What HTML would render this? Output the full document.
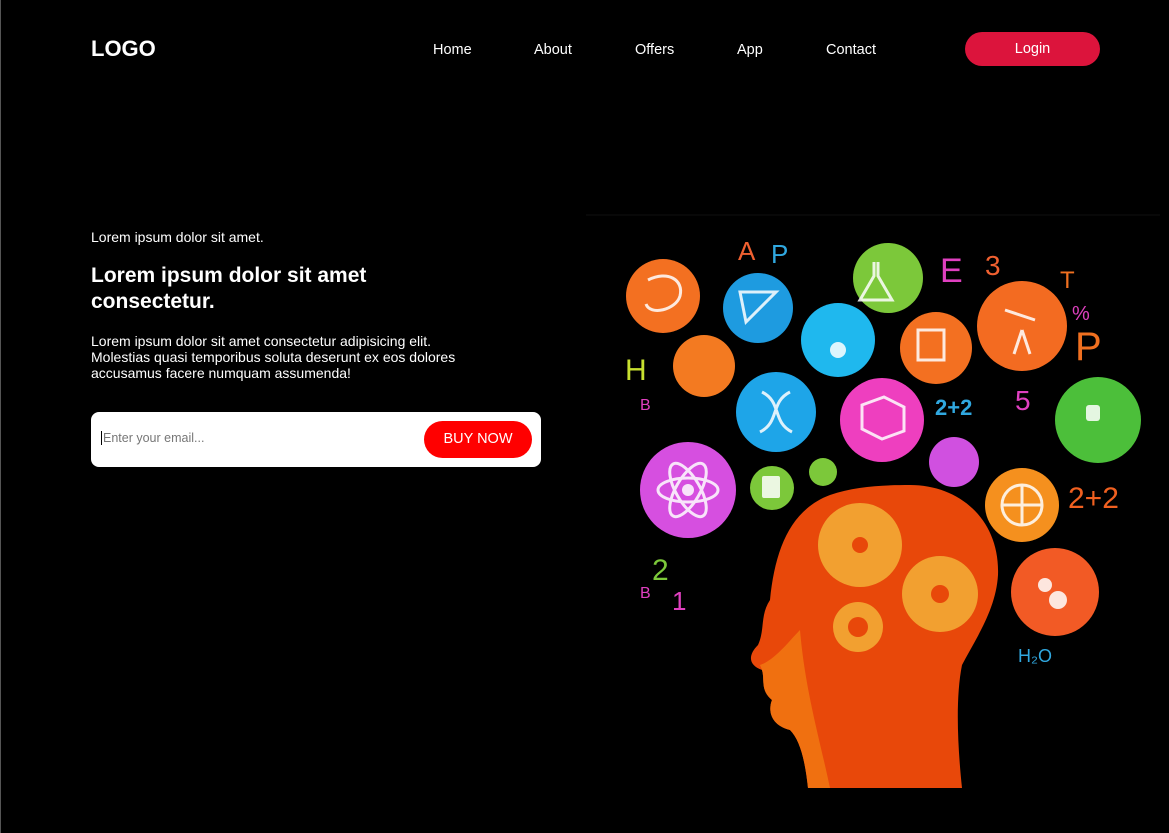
<!DOCTYPE html>
<html><head><style>
*{margin:0;padding:0;box-sizing:border-box}
body{width:1169px;height:833px;background:#000;font-family:"Liberation Sans",Arial,sans-serif;color:#fff;position:relative;overflow:hidden}
.bl{position:absolute;left:0;top:0;width:1px;height:833px;background:#555}
.logo{position:absolute;left:91px;top:36px;font-size:22px;font-weight:bold}
.nav a{position:absolute;top:42px;font-size:14.5px;color:#fff;text-decoration:none}
.login{position:absolute;left:965px;top:32px;width:135px;height:34px;border-radius:17px;background:#dc143c;font-size:14.5px;text-align:center;line-height:35px}
.p1{position:absolute;left:91px;top:229px;font-size:14px}
h1{position:absolute;left:91px;top:263px;font-size:21px;line-height:26px;font-weight:bold}
.p2{position:absolute;left:91px;top:333px;font-size:14px;line-height:16px;width:400px}
.box{position:absolute;left:91px;top:412px;width:450px;height:55px;background:#fff;border-radius:8px}
.box span{position:absolute;left:10px;top:19px;font-size:12.5px;color:#777;border-left:1px solid #000;padding-left:1px}
.buy{position:absolute;left:333px;top:9px;width:108px;height:37px;border-radius:19px;background:#f00;font-size:14.5px;text-align:center;line-height:37px}
svg{position:absolute;left:0;top:0}
</style></head><body>
<div class="bl"></div>
<div class="logo">LOGO</div>
<div class="nav"><a style="left:433px">Home</a><a style="left:534px">About</a><a style="left:635px">Offers</a><a style="left:737px">App</a><a style="left:826px">Contact</a></div>
<div class="login">Login</div>
<div class="p1">Lorem ipsum dolor sit amet.</div>
<h1>Lorem ipsum dolor sit amet<br>consectetur.</h1>
<div class="p2">Lorem ipsum dolor sit amet consectetur adipisicing elit. Molestias quasi temporibus soluta deserunt ex eos dolores accusamus facere numquam assumenda!</div>
<div class="box"><span>Enter your email...</span><div class="buy">BUY NOW</div></div>
<svg width="1169" height="833">
<line x1="586" y1="215" x2="1160" y2="215" stroke="#111"/>
<path d="M910 485 C960 485 1000 520 998 575 C996 610 975 640 962 665 C955 700 958 750 962 788 L808 788 C805 760 800 740 790 730 C770 725 768 710 772 700 C760 690 765 680 762 670 C748 665 748 655 758 645 C765 630 760 615 770 600 C775 550 790 510 830 495 C855 486 885 485 910 485Z" fill="#e8480a"/>
<path d="M760 665 C775 660 790 640 800 630 C805 690 820 740 830 788 L808 788 C805 760 800 740 790 730 C770 725 768 710 772 700 C760 690 765 680 762 670Z" fill="#f07010"/>
<g fill="#f2a030"><circle cx="860" cy="545" r="42"/><circle cx="940" cy="594" r="38"/><circle cx="858" cy="627" r="25"/></g>
<g fill="#e8480a"><circle cx="860" cy="545" r="8"/><circle cx="940" cy="594" r="9"/><circle cx="858" cy="627" r="10"/></g>
<g>
<circle cx="663" cy="296" r="37" fill="#f37021"/>
<circle cx="758" cy="308" r="35" fill="#1e9be0"/>
<circle cx="888" cy="278" r="35" fill="#7cc83a"/>
<circle cx="838" cy="340" r="37" fill="#1fb8ee"/>
<circle cx="936" cy="348" r="36" fill="#f37021"/>
<circle cx="1022" cy="326" r="45" fill="#f36b21"/>
<circle cx="704" cy="366" r="31" fill="#f37a21"/>
<circle cx="776" cy="412" r="40" fill="#1ea5e8"/>
<circle cx="882" cy="420" r="42" fill="#ee3fbf"/>
<circle cx="1098" cy="420" r="43" fill="#4cbf3a"/>
<circle cx="688" cy="490" r="48" fill="#d64fe0"/>
<circle cx="772" cy="488" r="22" fill="#7cc83a"/>
<circle cx="823" cy="472" r="14" fill="#7cc83a"/>
<circle cx="954" cy="462" r="25" fill="#d050e0"/>
<circle cx="1022" cy="505" r="37" fill="#f5901e"/>
<circle cx="1055" cy="592" r="44" fill="#f25a25"/>
</g>
<g fill="none" stroke="#fff" stroke-width="3" opacity=".85">
<ellipse cx="688" cy="490" rx="30" ry="12"/><ellipse cx="688" cy="490" rx="30" ry="12" transform="rotate(60 688 490)"/><ellipse cx="688" cy="490" rx="30" ry="12" transform="rotate(-60 688 490)"/>
<path d="M862 405 l22 -8 l20 10 v24 l-22 8 l-20 -10z"/>
<path d="M762 392 c20 10 10 30 30 40 M790 392 c-20 10 -10 30 -30 40"/>
<circle cx="1022" cy="505" r="20"/><path d="M1002 505 h40 M1022 485 v40"/>
<path d="M740 292 l36 0 l-30 30z"/>
<path d="M874 262 l0 14 l-14 24 h32 l-14 -24 v-14"/>
<path d="M1005 310 l30 10 M1022 330 l-8 24 M1022 330 l8 24"/>
<path d="M918 330 h26 v30 h-26z"/>
<path d="M648 280 c20 -10 36 0 32 16 c-4 14 -30 20 -34 8"/>
</g>
<g fill="#fff" opacity=".85"><circle cx="838" cy="350" r="8"/><circle cx="688" cy="490" r="6"/><circle cx="1058" cy="600" r="9"/><circle cx="1045" cy="585" r="7"/><rect x="1086" y="405" width="14" height="16" rx="3"/><rect x="762" y="476" width="18" height="22" rx="2"/></g>
<g font-family="Liberation Sans" font-size="34">
<text x="940" y="282" fill="#e040c0">E</text><text x="985" y="275" fill="#f06030" font-size="28">3</text>
<text x="1075" y="360" fill="#f07020" font-size="40">P</text><text x="625" y="380" fill="#c8e030" font-size="30">H</text>
<text x="1068" y="508" fill="#f06020" font-size="30">2+2</text><text x="935" y="415" fill="#30a8e0" font-size="22" font-weight="bold">2+2</text>
<text x="652" y="580" fill="#7cc83a" font-size="30">2</text><text x="672" y="610" fill="#e040c0" font-size="26">1</text>
<text x="738" y="260" fill="#f06030" font-size="26">A</text><text x="771" y="263" fill="#30a8e0" font-size="26">P</text>
<text x="1060" y="288" fill="#f07020" font-size="24">T</text><text x="1072" y="320" fill="#e040c0" font-size="20">%</text>
<text x="1015" y="410" fill="#e040c0" font-size="28">5</text>
<text x="1018" y="662" fill="#30a8e0" font-size="18">H₂O</text>
<text x="640" y="598" fill="#e040c0" font-size="16">B</text>
<text x="640" y="410" fill="#e040c0" font-size="16">B</text>
</g>
</svg>
</body></html>
